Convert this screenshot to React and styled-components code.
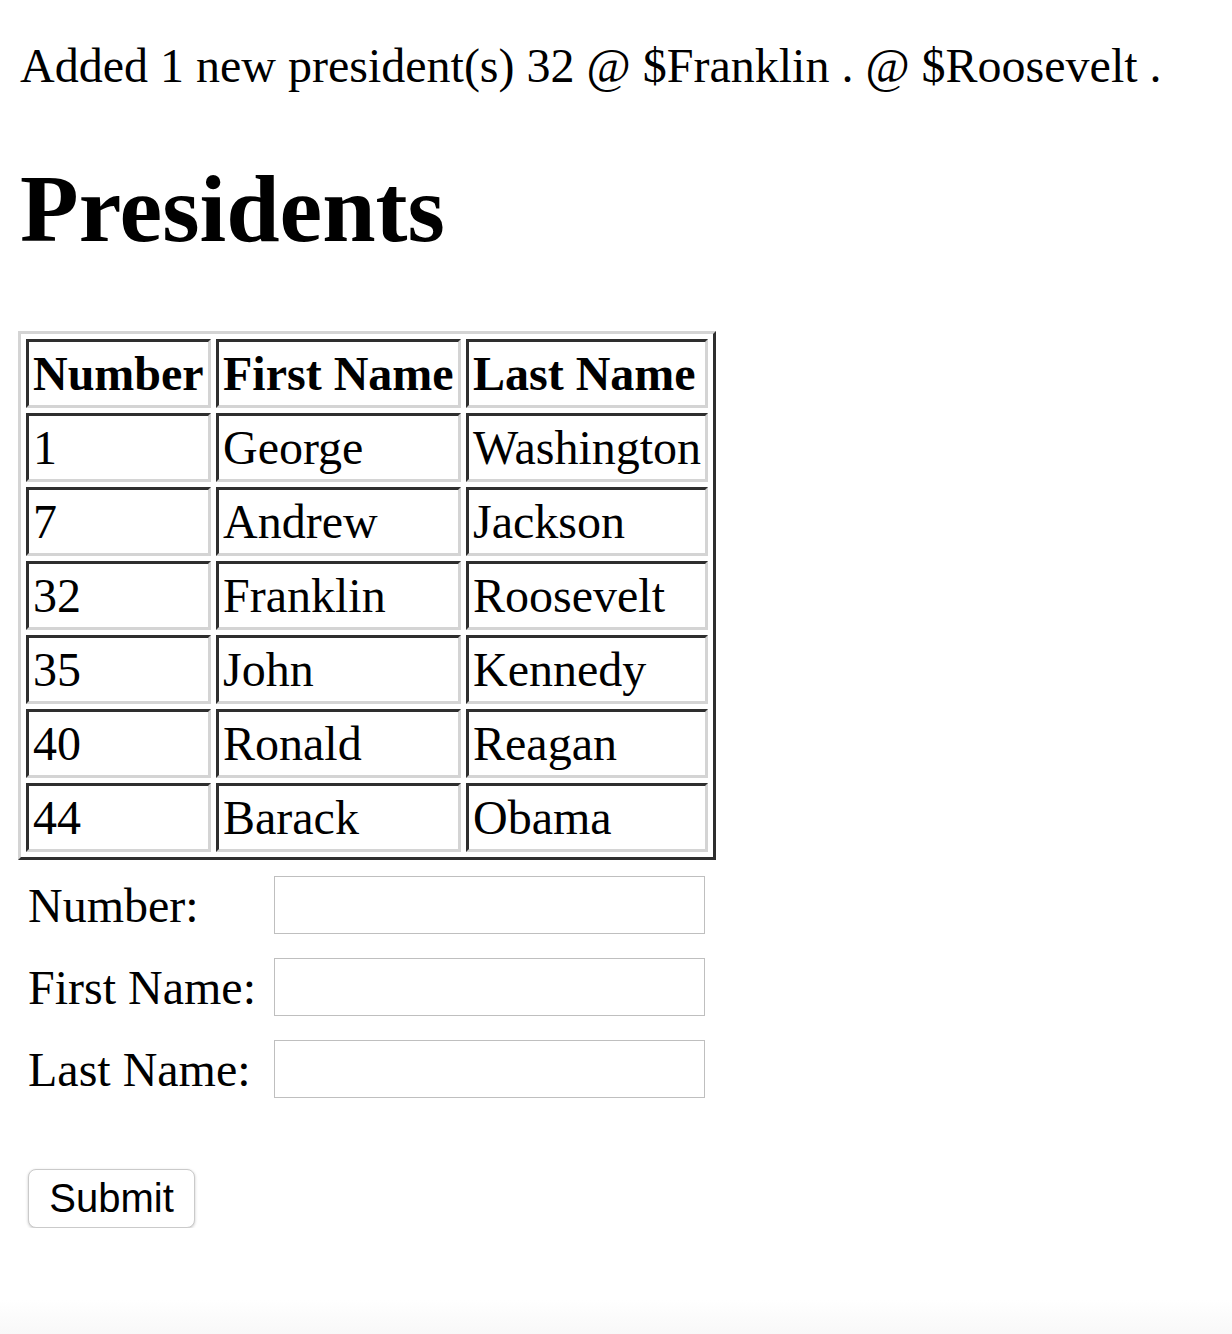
import React from "react"
import styled, { createGlobalStyle } from "styled-components"

const GlobalStyle = createGlobalStyle`
  html {
    background: linear-gradient(180deg, #ffffff 1300px, #f8f8f8 1334px);
    min-height: 1334px;
  }
  body {
    margin: 0;
    font-family: "Liberation Serif", "Times New Roman", serif;
    color: #000;
  }
`

const Page = styled.div`
  padding: 38px 18px 0;
`

const Message = styled.p`
  margin: 0;
  padding-left: 2px;
  font-size: 48px;
  line-height: 55px;
`

const Heading = styled.h1`
  margin: 61px 0 67px;
  padding-left: 2px;
  font-size: 96px;
  line-height: 110px;
  font-weight: bold;
`

const Table = styled.table`
  border-collapse: separate;
  border-spacing: 5px;
  border: 3px solid;
  border-color: #d4d4d4 #2e2e2e #2e2e2e #d4d4d4;
  table-layout: fixed;
`

const Cell = styled.td`
  box-sizing: border-box;
  width: ${props => props.width || "auto"};
  height: 69px;
  border: 3px solid;
  border-color: #2e2e2e #d4d4d4 #d4d4d4 #2e2e2e;
  padding: 4px;
  font-size: 48px;
  line-height: 55px;
  text-align: left;
  white-space: nowrap;
  font-weight: ${props => (props.as === "th" ? "bold" : "normal")};
`

const Form = styled.form`
  margin-top: 16px;
  padding-left: 10px;
`

const Fields = styled.div`
  display: grid;
  grid-template-columns: 246px 431px;
  row-gap: 24px;
  align-items: center;
`

const Label = styled.label`
  font-size: 48px;
  line-height: 55px;
`

const Input = styled.input`
  box-sizing: border-box;
  width: 431px;
  height: 58px;
  margin: 0;
  border: 1px solid #bfbfbf;
  background: #fff;
  font-size: 40px;
  outline: none;
`

const SubmitButton = styled.button`
  display: block;
  box-sizing: border-box;
  margin-top: 71px;
  width: 167px;
  height: 59px;
  padding: 0;
  border: 1px solid #cacaca;
  border-radius: 8px;
  background: #fff;
  box-shadow: 0 1px 3px rgba(0, 0, 0, 0.22);
  font-family: "Liberation Sans", Arial, sans-serif;
  font-size: 40px;
  color: #000;
`

const presidents = [
  ["1", "George", "Washington"],
  ["7", "Andrew", "Jackson"],
  ["32", "Franklin", "Roosevelt"],
  ["35", "John", "Kennedy"],
  ["40", "Ronald", "Reagan"],
  ["44", "Barack", "Obama"],
]

const widths = ["185px", "245px", "239px"]

export default function App() {
  return (
    <Page>
      <GlobalStyle />
      <Message>
        Added 1 new president(s) 32 @ $Franklin . @ $Roosevelt .
      </Message>
      <Heading>Presidents</Heading>
      <Table>
        <thead>
          <tr>
            {["Number", "First Name", "Last Name"].map((h, i) => (
              <Cell as="th" key={h} width={widths[i]}>
                {h}
              </Cell>
            ))}
          </tr>
        </thead>
        <tbody>
          {presidents.map(row => (
            <tr key={row[0]}>
              {row.map(v => (
                <Cell key={v}>{v}</Cell>
              ))}
            </tr>
          ))}
        </tbody>
      </Table>
      <Form onSubmit={e => e.preventDefault()}>
        <Fields>
          <Label htmlFor="number">Number:</Label>
          <Input id="number" type="text" />
          <Label htmlFor="first">First Name:</Label>
          <Input id="first" type="text" />
          <Label htmlFor="last">Last Name:</Label>
          <Input id="last" type="text" />
        </Fields>
        <SubmitButton type="submit">Submit</SubmitButton>
      </Form>
    </Page>
  )
}
